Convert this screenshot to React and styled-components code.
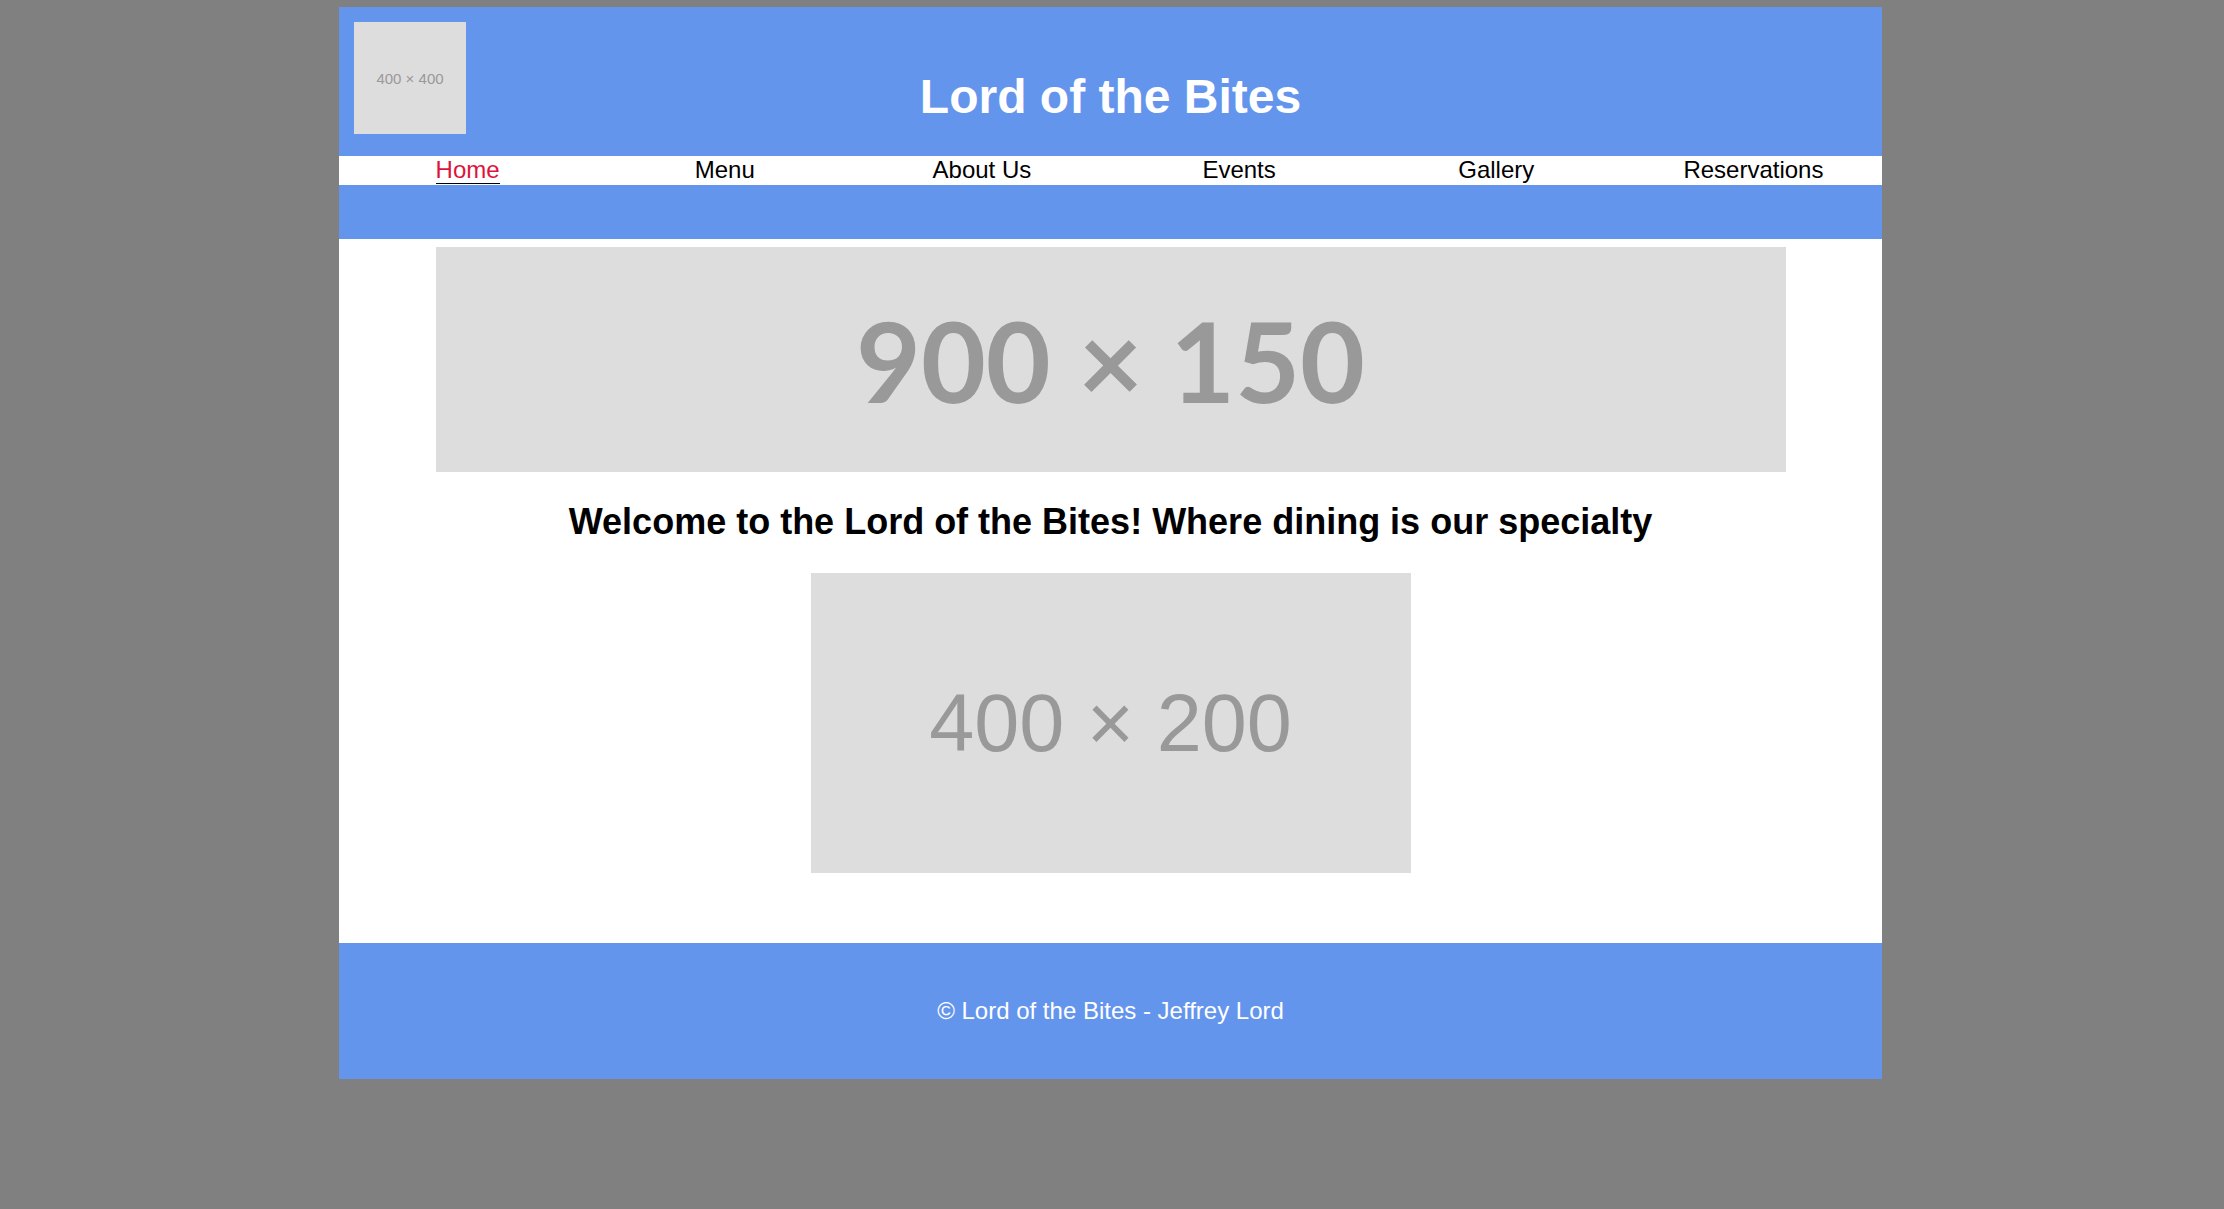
import React from "react";
import styled, { createGlobalStyle } from "styled-components";

const GlobalStyle = createGlobalStyle`
  html, body {
    margin: 0;
    padding: 0;
    background: #808080;
  }
  body {
    font-family: "Liberation Sans", Arial, sans-serif;
  }
`;

const Page = styled.div`
  padding-top: 7px;
  min-height: 1209px;
  box-sizing: border-box;
`;

const Container = styled.div`
  width: 1543px;
  margin-left: calc(50% - 773px);
  background: #ffffff;
`;

const Header = styled.header`
  background: #6495ed;
  padding: 15px 15px 22px;
  display: grid;
  grid-template-columns: 1fr auto 1fr;
  align-items: start;
`;

const Placeholder = styled.div`
  width: ${(p) => p.$w}px;
  height: ${(p) => p.$h}px;
  flex-shrink: 0;
  background: #dddddd;
  color: #999999;
  display: flex;
  align-items: center;
  justify-content: center;
  font-family: ${(p) => p.$font || '"Liberation Sans", Arial, sans-serif'};
  font-size: ${(p) => p.$size}px;
  font-weight: ${(p) => p.$weight || 400};
  white-space: nowrap;
`;

const LogoSlot = styled.div`
  justify-self: start;
`;

const Title = styled.h1`
  margin: 47px 0 0;
  font-size: 48px;
  font-weight: 700;
  color: #ffffff;
  line-height: normal;
  white-space: nowrap;
`;

const Nav = styled.nav`
  background: #ffffff;
  height: 29px;
  display: flex;
`;

const NavItem = styled.div`
  flex: 1;
  text-align: center;
`;

const NavLink = styled.a`
  font-size: 24px;
  line-height: normal;
  color: ${(p) => (p.$active ? "#dc143c" : "#000000")};
  text-decoration: none;
  border-bottom: 1px solid ${(p) => (p.$active ? "#000000" : "transparent")};
  cursor: pointer;
`;

const Band = styled.div`
  height: 54px;
  background: #6495ed;
`;

const Main = styled.main`
  padding: 8px 0 70px;
  display: flex;
  flex-direction: column;
  align-items: center;
`;

const Welcome = styled.h2`
  margin: 29px 0 30px;
  font-size: 36px;
  font-weight: 700;
  line-height: normal;
  color: #000000;
  white-space: nowrap;
`;

const Footer = styled.footer`
  height: 136px;
  background: #6495ed;
  color: #ffffff;
  font-size: 24px;
  display: flex;
  align-items: center;
  justify-content: center;
`;

const links = ["Home", "Menu", "About Us", "Events", "Gallery", "Reservations"];

export default function App() {
  return (
    <>
      <GlobalStyle />
      <Page>
        <Container>
          <Header>
            <LogoSlot>
              <Placeholder $w={112} $h={112} $size={15}>
                400 × 400
              </Placeholder>
            </LogoSlot>
            <Title>Lord of the Bites</Title>
            <div />
          </Header>
          <Nav>
            {links.map((l, i) => (
              <NavItem key={l}>
                <NavLink $active={i === 0}>{l}</NavLink>
              </NavItem>
            ))}
          </Nav>
          <Band />
          <Main>
            <Placeholder
              $w={1350}
              $h={225}
              $size={112}
              $weight={700}
              $font={'Lato, "Liberation Sans", sans-serif'}
            >
              900 × 150
            </Placeholder>
            <Welcome>
              Welcome to the Lord of the Bites! Where dining is our specialty
            </Welcome>
            <Placeholder $w={600} $h={300} $size={81}>
              400 × 200
            </Placeholder>
          </Main>
          <Footer>© Lord of the Bites - Jeffrey Lord</Footer>
        </Container>
      </Page>
    </>
  );
}
